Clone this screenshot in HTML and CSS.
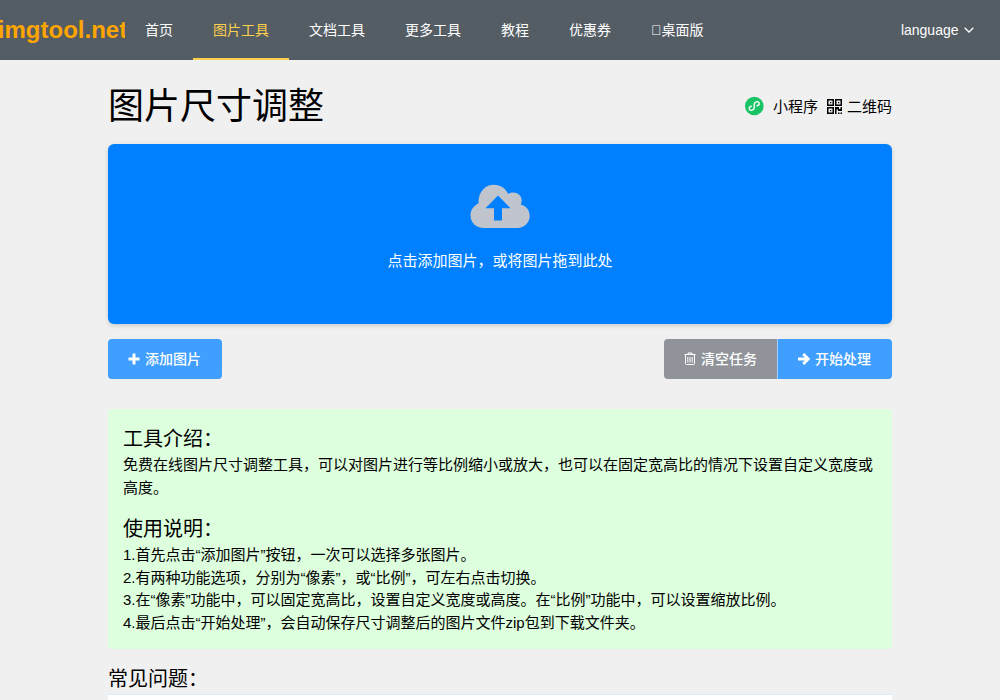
FILE: index.html
```
<!DOCTYPE html>
<html lang="zh-CN">
<head>
    <meta charset="UTF-8">
    <meta name="viewport" content="width=device-width, initial-scale=1.0">
    <title>图片尺寸调整</title>
    <link rel="stylesheet" href="styles.css">
</head>
<body>

    <header class="navbar">
        <a class="logo" href="#">imgtool.net</a>
        <nav class="menu">
            <a href="#">首页</a>
            <a class="active" href="#">图片工具</a>
            <a href="#">文档工具</a>
            <a href="#">更多工具</a>
            <a href="#">教程</a>
            <a href="#">优惠券</a>
            <a href="#">&#xe62a;桌面版</a>
        </nav>
        <div class="language">
            <span>language</span>
            <svg width="10" height="6" viewBox="0 0 10 6"><path d="M0.700 0.700L5 5l4.300-4.300" fill="none" stroke="#fff" stroke-width="1.300"/></svg>
        </div>
    </header>

    <main class="container">
        <div class="title-bar">
            <h1>图片尺寸调整</h1>
            <div class="title-links">
                <a href="#">
                    <svg class="mini-icon" width="20" height="20" viewBox="0 0 20 20">
                        <circle cx="10.300" cy="10" r="9.300" fill="#19c467"/>
                        <path d="M7.300 10.200C5.500 10.600 4.900 11.800 5.200 12.900c.4 1.200 1.700 1.700 3 1.300 1.300-.4 2-1.200 2-2.400V8.200c0-1.200.8-2 2-2.400 1.300-.4 2.700.2 3 1.300.3 1.200-.4 2.300-2.200 2.700" fill="none" stroke="#fff" stroke-width="1.400" stroke-linecap="round"/>
                    </svg>
                    <span>小程序</span>
                </a>
                <a href="#">
                    <svg class="qr-icon" width="15" height="15" viewBox="0 0 15 15">
                        <path d="M0 0h7v7H0zM8 0h7v7H8zM0 8h7v7H0zM1.500 1.500v4h4v-4zM9.500 1.500v4h4v-4zM1.500 9.500v4h4v-4z" fill-rule="evenodd"/>
                        <path d="M3 3h1.300v1.300H3zM11 3h1.300v1.300H11zM3 11h1.300v1.300H3zM8 8h4v2h1.500V8H15v4h-4v-1.500H9.500V15H8zM11 13.500h1.500V15H11zM13.500 13.500H15V15h-1.500z"/>
                    </svg>
                    <span>二维码</span>
                </a>
            </div>
        </div>

        <div class="upload">
            <svg width="60" height="44" viewBox="0 0 60 44">
                <path d="M14 44C6 44 .5 38.500 .5 31.500c0-5.500 3.200-10 8-12C8 8.500 14.500.7 24 .7c6.500 0 11.500 3.500 14.300 9.300C44 6.500 51.700 10 51.700 16.500c0 1.500-.3 2.700-1 4 5.500 1.300 9 5.700 9 11.500C59.700 38.800 54 44 47.500 44z" fill="#c0c4cc"/>
                <path d="M28 11.500L15.500 24.200H24v12.300h8V24.200h8.500z" fill="#0080ff"/>
            </svg>
            <p>点击添加图片，或将图片拖到此处</p>
        </div>

        <div class="actions">
            <button class="btn btn-primary">
                <svg width="12" height="12" viewBox="0 0 12 12"><path d="M4.500 0.500h3v4h4v3h-4v4h-3v-4h-4v-3h4z" fill="#fff"/></svg>
                <span>添加图片</span>
            </button>
            <div class="btn-group">
                <button class="btn btn-info">
                    <svg width="12" height="13" viewBox="0 0 12 13"><path d="M0.500 2.500h11M4 2.500v-1.500h4v1.500M1.500 2.500v9q0 1 1 1h7q1 0 1-1v-9M3.800 5v5.500M6 5v5.500M8.200 5v5.500" fill="none" stroke="#fff"/></svg>
                    <span>清空任务</span>
                </button>
                <button class="btn btn-primary">
                    <svg width="12" height="12" viewBox="0 0 12 12"><path d="M0 6h10M5.200 0.900L10.300 6l-5.100 5.100" fill="none" stroke="#fff" stroke-width="2.900"/></svg>
                    <span>开始处理</span>
                </button>
            </div>
        </div>

        <section class="intro">
            <h3>工具介绍：</h3>
            <p>免费在线图片尺寸调整工具，可以对图片进行等比例缩小或放大，也可以在固定宽高比的情况下设置自定义宽度或高度。</p>
            <h3>使用说明：</h3>
            <p>
                1.首先点击“添加图片”按钮，一次可以选择多张图片。<br>
                2.有两种功能选项，分别为“像素”，或“比例”，可左右点击切换。<br>
                3.在“像素”功能中，可以固定宽高比，设置自定义宽度或高度。在“比例”功能中，可以设置缩放比例。<br>
                4.最后点击“开始处理”，会自动保存尺寸调整后的图片文件zip包到下载文件夹。
            </p>
        </section>

        <section class="faq">
            <h3>常见问题：</h3>
            <div class="faq-list"></div>
        </section>
    </main>

</body>
</html>
```
FILE: styles.css
```
* {
    box-sizing: border-box;
}

body {
    margin: 0;
    background-color: #f0f0f0;
    color: #000;
    font-family: "Liberation Sans", "Noto Sans CJK SC", sans-serif;
    font-size: 15px;
    line-height: 1.5;
}

h1, h3, p {
    margin: 0;
    font-weight: normal;
}

a {
    color: inherit;
    text-decoration: none;
}

svg {
    display: block;
    flex: none;
}

.navbar {
    display: flex;
    height: 60px;
    background-color: #545c64;
    color: #fff;
    font-size: 14px;
    line-height: 60px;
}

.logo {
    display: flex;
    justify-content: center;
    width: 125px;
    overflow: hidden;
    color: #ffa500;
    font-size: 24px;
    font-weight: bold;
}

.menu {
    display: flex;
    flex: 1;
}

.menu a {
    height: 60px;
    padding: 0 20px;
}

.menu .active {
    color: #ffd04b;
    border-bottom: 2px solid #ffd04b;
}

.language {
    display: flex;
    align-items: center;
    gap: 5px;
    padding-right: 26.5px;
}

.container {
    width: 784px;
    margin: 0 auto;
}

.title-bar {
    display: flex;
    justify-content: space-between;
    align-items: center;
    height: 84px;
    padding-top: 10px;
}

.title-bar h1 {
    font-size: 36px;
}

.title-links {
    display: flex;
    gap: 9px;
}

.title-links a {
    display: flex;
    align-items: center;
}

.mini-icon {
    margin: 0 9px 2px 0;
}

.qr-icon {
    margin: 0 5px 2px 0;
}

.upload {
    display: flex;
    flex-direction: column;
    align-items: center;
    gap: 22px;
    height: 180px;
    padding-top: 40px;
    background-color: #0080ff;
    border-radius: 6px;
    box-shadow: 0 2px 4px rgba(0, 0, 0, 0.12), 0 0 6px rgba(0, 0, 0, 0.04);
    color: #fff;
}

.actions {
    display: flex;
    justify-content: space-between;
    margin-top: 15px;
}

.btn-group {
    display: flex;
}

.btn {
    display: flex;
    align-items: center;
    gap: 5px;
    width: 114px;
    height: 40px;
    padding: 0 0 1px 20px;
    border: 0;
    border-radius: 4px;
    color: #fff;
    font-family: inherit;
    font-size: 14px;
    font-weight: 500;
    line-height: 20px;
    cursor: pointer;
}

.btn-primary {
    background-color: #409eff;
}

.btn-info {
    background-color: #909399;
}

.btn-group .btn-info {
    width: 113px;
    border-radius: 4px 0 0 4px;
}

.btn-group .btn-primary {
    width: 115px;
    border-left: 1px solid rgba(255, 255, 255, 0.5);
    border-radius: 0 4px 4px 0;
}

.intro {
    margin-top: 30px;
    padding: 15px;
    background-color: #ddffdd;
    border-radius: 4px;
}

.intro h3, .faq h3 {
    font-size: 20px;
}

.intro p + h3 {
    margin-top: 15px;
}

.faq {
    margin-top: 15px;
}

.faq-list {
    height: 6px;
    background-color: #fff;
    border-top: 1px solid #d9ecff;
}
```
